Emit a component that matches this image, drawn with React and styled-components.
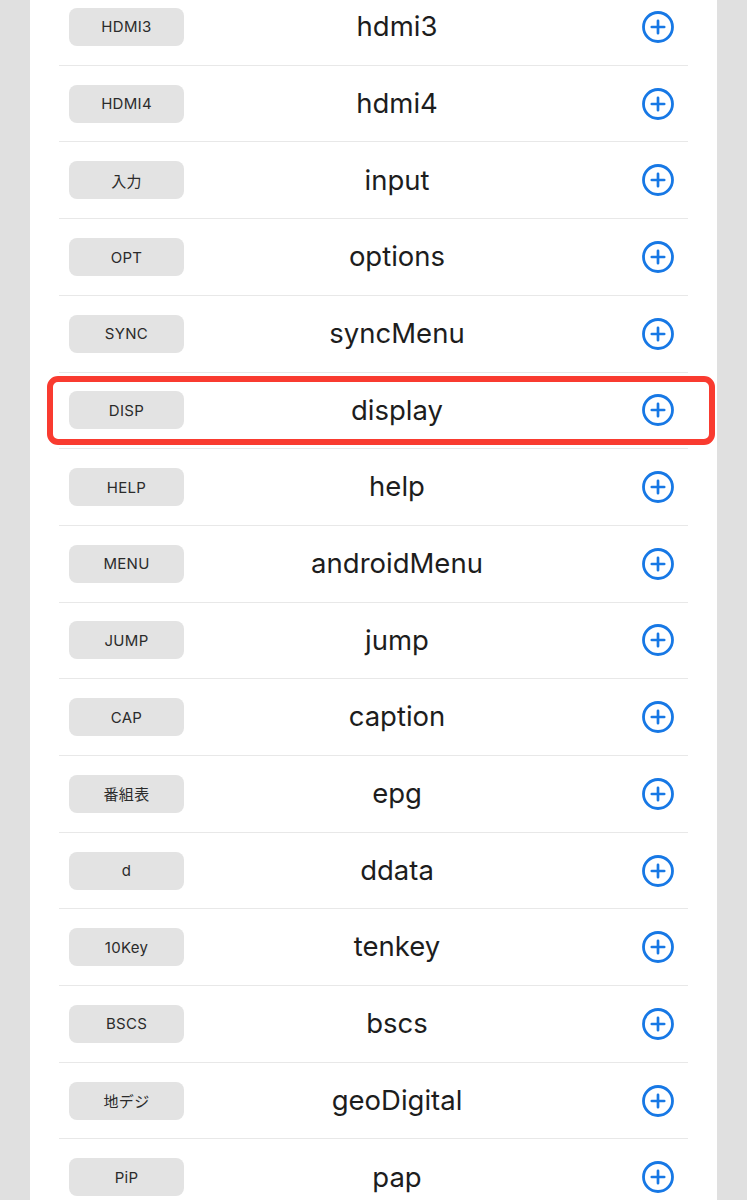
import React from "react";
import styled, { createGlobalStyle } from "styled-components";

const Global = createGlobalStyle`
  html, body { margin: 0; padding: 0; background: #e0e0e0; }
  body { overflow: hidden; font-family: Inter, "Noto Sans", "Noto Sans CJK JP", sans-serif; }
`;

const Page = styled.div`
  width: 747px;
  height: 1200px;
  background: #e0e0e0;
  display: flex;
  justify-content: flex-start;
  overflow: hidden;
`;

const Panel = styled.div`
  margin-left: 30px;
  width: 687px;
  background: #ffffff;
  display: flex;
  flex-direction: column;
  padding: 0 29px 0 29px;
  box-sizing: border-box;
`;

const List = styled.div`
  margin-top: -10.9px;
  display: flex;
  flex-direction: column;
`;

const Row = styled.div`
  position: relative;
  height: 76.7px;
  box-sizing: border-box;
  border-bottom: 1px solid #e8e8e8;
  display: grid;
  grid-template-columns: 115px 1fr 32px;
  align-items: center;
  padding: 0 14.3px 0 10px;
`;

const Pill = styled.div`
  height: 38px;
  border-radius: 8px;
  background: #e3e3e3;
  display: flex;
  align-items: center;
  justify-content: center;
  font-size: 15px;
  color: #2b2b2b;
  font-family: Inter, "Noto Sans CJK JP", sans-serif;
  letter-spacing: 0.3px;
`;

const Label = styled.div`
  text-align: center;
  padding-right: 31.7px;
  font-size: 27.5px;
  color: #1d1d1d;
  font-family: Inter, "Noto Sans", sans-serif;
  line-height: 1;
`;

const Highlight = styled.div`
  position: absolute;
  left: -12px;
  right: -27px;
  top: 3px;
  bottom: 3.5px;
  border: 6px solid #f93b30;
  border-radius: 11px;
  pointer-events: none;
`;

const AddIcon = () => (
  <svg width="32" height="32" viewBox="0 0 32 32" fill="none">
    <circle cx="16" cy="16" r="14.5" stroke="#1778e5" strokeWidth="2.8" />
    <path d="M16 9.8v12.4M9.8 16h12.4" stroke="#1778e5" strokeWidth="2.7" strokeLinecap="round" />
  </svg>
);

const rows = [
  ["HDMI3", "hdmi3"],
  ["HDMI4", "hdmi4"],
  ["入力", "input"],
  ["OPT", "options"],
  ["SYNC", "syncMenu"],
  ["DISP", "display", true],
  ["HELP", "help"],
  ["MENU", "androidMenu"],
  ["JUMP", "jump"],
  ["CAP", "caption"],
  ["番組表", "epg"],
  ["d", "ddata"],
  ["10Key", "tenkey"],
  ["BSCS", "bscs"],
  ["地デジ", "geoDigital"],
  ["PiP", "pap"],
];

export default function App() {
  return (
    <>
      <Global />
      <Page>
        <Panel>
          <List>
            {rows.map(([key, name, hl]) => (
              <Row key={name}>
                <Pill>{key}</Pill>
                <Label>{name}</Label>
                <AddIcon />
                {hl && <Highlight />}
              </Row>
            ))}
          </List>
        </Panel>
      </Page>
    </>
  );
}
